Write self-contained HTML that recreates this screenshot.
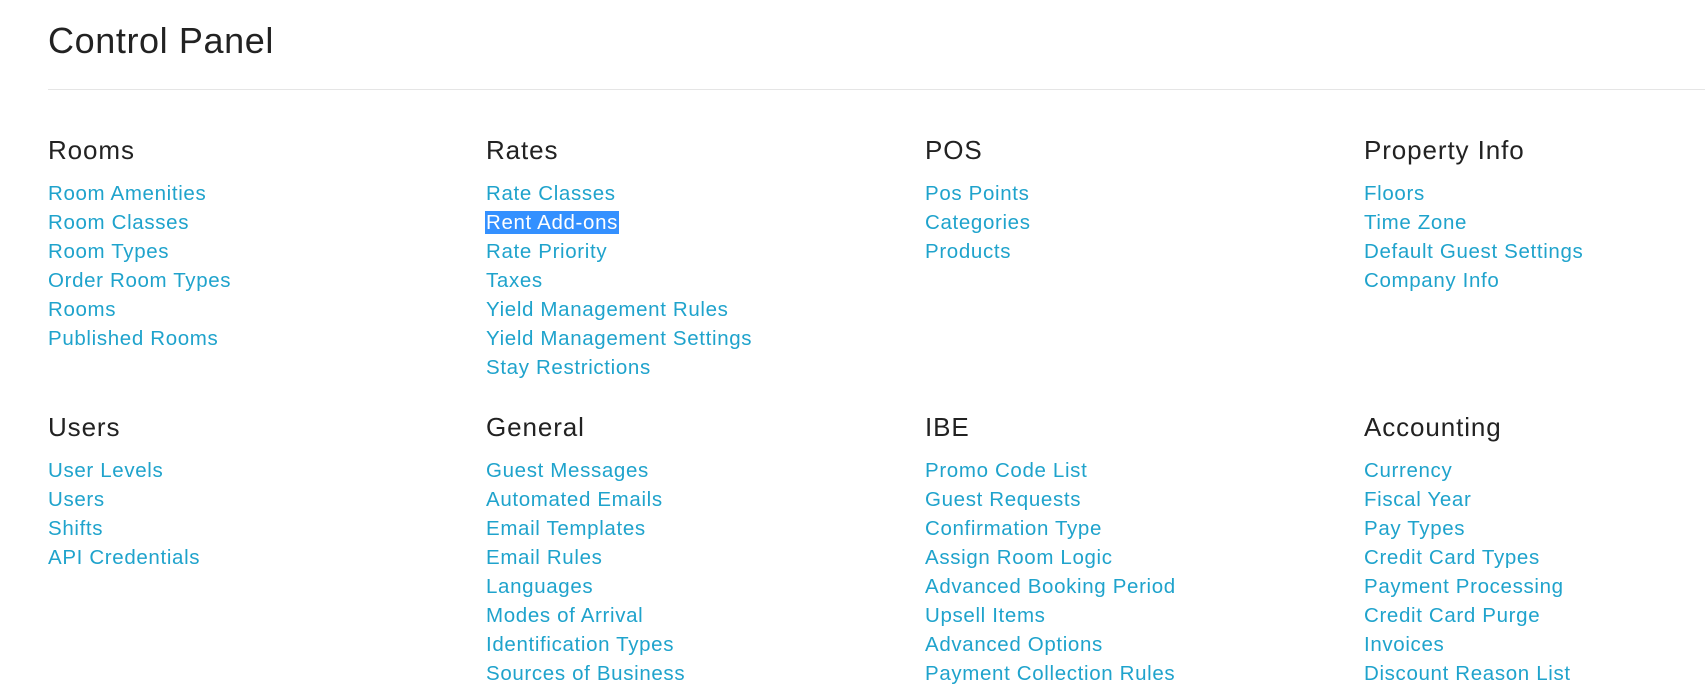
<!DOCTYPE html>
<html><head><meta charset="utf-8"><style>
body{margin:0;width:1705px;height:689px;overflow:hidden;background:#fff;font-family:"Liberation Sans",sans-serif;position:relative}
h1{position:absolute;left:48px;top:21px;margin:0;font-weight:normal;font-size:36px;line-height:40px;color:#222;letter-spacing:0.6px}
.hr{position:absolute;left:48px;right:0;top:89px;border-top:1px solid #e5e5e5}
.col{position:absolute;width:420px}
.col h2{margin:0;font-weight:normal;font-size:26px;line-height:30px;color:#222;height:44px;letter-spacing:0.9px}
.col a{display:block;font-size:20.5px;line-height:29px;color:#1fa3cc;text-decoration:none;letter-spacing:0.65px;white-space:nowrap}
.sel{background:#3390ff;color:#fff;padding:0 1px;margin-left:-1px}
</style></head><body>
<h1>Control Panel</h1>
<div class="hr"></div>
<div class="col" style="left:48px;top:135px"><h2>Rooms</h2><a>Room Amenities</a><a>Room Classes</a><a>Room Types</a><a>Order Room Types</a><a>Rooms</a><a>Published Rooms</a></div>
<div class="col" style="left:486px;top:135px"><h2>Rates</h2><a>Rate Classes</a><a><span class="sel">Rent Add-ons</span></a><a>Rate Priority</a><a>Taxes</a><a>Yield Management Rules</a><a>Yield Management Settings</a><a>Stay Restrictions</a></div>
<div class="col" style="left:925px;top:135px"><h2>POS</h2><a>Pos Points</a><a>Categories</a><a>Products</a></div>
<div class="col" style="left:1364px;top:135px"><h2>Property Info</h2><a>Floors</a><a>Time Zone</a><a>Default Guest Settings</a><a>Company Info</a></div>
<div class="col" style="left:48px;top:412px"><h2>Users</h2><a>User Levels</a><a>Users</a><a>Shifts</a><a>API Credentials</a></div>
<div class="col" style="left:486px;top:412px"><h2>General</h2><a>Guest Messages</a><a>Automated Emails</a><a>Email Templates</a><a>Email Rules</a><a>Languages</a><a>Modes of Arrival</a><a>Identification Types</a><a>Sources of Business</a></div>
<div class="col" style="left:925px;top:412px"><h2>IBE</h2><a>Promo Code List</a><a>Guest Requests</a><a>Confirmation Type</a><a>Assign Room Logic</a><a>Advanced Booking Period</a><a>Upsell Items</a><a>Advanced Options</a><a>Payment Collection Rules</a></div>
<div class="col" style="left:1364px;top:412px"><h2>Accounting</h2><a>Currency</a><a>Fiscal Year</a><a>Pay Types</a><a>Credit Card Types</a><a>Payment Processing</a><a>Credit Card Purge</a><a>Invoices</a><a>Discount Reason List</a></div>
</body></html>
